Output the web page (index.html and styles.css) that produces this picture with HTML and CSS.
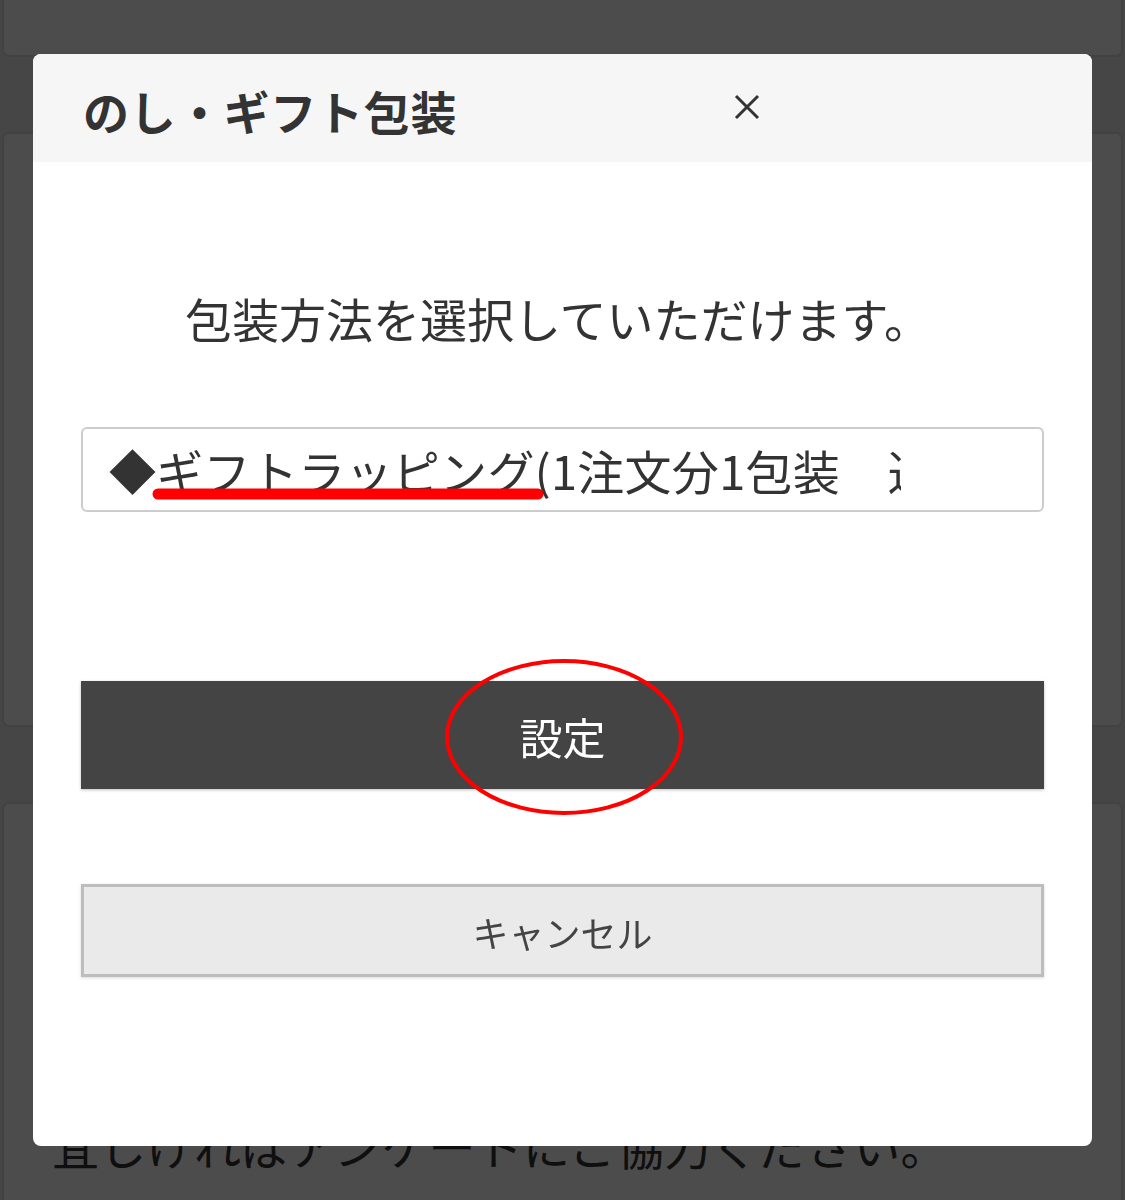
FILE: index.html
```html
<!DOCTYPE html>
<html lang="ja">
<head>
<meta charset="utf-8">
<title>のし・ギフト包装</title>
<link rel="stylesheet" href="styles.css">
</head>
<body>
<div class="page">
  <div class="card card-top"></div>
  <div class="card card-mid"></div>
  <div class="card card-bottom">
    <p class="survey">宜しければアンケートにご協力ください。</p>
  </div>
</div>
<div class="overlay"></div>
<div class="modal">
  <div class="modal-header">
    <h1 class="modal-title">のし・ギフト包装</h1>
    <span class="close" aria-label="close">
      <svg width="26" height="26" viewBox="0 0 26 26"><path d="M2 2 L24 24 M24 2 L2 24" stroke="#333" stroke-width="3" fill="none"/></svg>
    </span>
  </div>
  <div class="modal-body">
    <p class="lead">包装方法を選択していただけます。</p>
    <div class="select"><span class="select-text">◆ギフトラッピング(1注文分1包装　送料無料)</span></div>
    <button class="btn btn-primary">設定</button>
    <button class="btn btn-cancel">キャンセル</button>
  </div>
  <svg class="marks" width="1059" height="1092" viewBox="0 0 1059 1092">
    <line x1="125" y1="440" x2="505" y2="440" stroke="#ff0000" stroke-width="11" stroke-linecap="round"/>
    <ellipse cx="531" cy="683" rx="117" ry="76" stroke="#ff0000" stroke-width="4" fill="none"/>
  </svg>
</div>
</body>
</html>
```
FILE: styles.css
```css
* { box-sizing: border-box; }
html, body {
  margin: 0;
  padding: 0;
  height: 100%;
  overflow: hidden;
}
body {
  background: #ececec;
  font-family: "Noto Sans CJK JP", "Noto Sans", sans-serif;
  color: #333;
}
.page {
  padding: 0 2px;
  display: flex;
  flex-direction: column;
  gap: 75px;
}
.card {
  background: #fff;
  border: 2px solid #dcdcdc;
  border-radius: 7px;
}
.card-top {
  margin-top: -60px;
  height: 117px;
}
.card-mid {
  height: 595px;
}
.card-bottom {
  height: 500px;
  padding: 307px 0 0 48px;
}
.survey {
  margin: 0;
  font-size: 47px;
  letter-spacing: 0.3px;
  line-height: 68px;
  color: #333;
  white-space: nowrap;
}
.overlay {
  position: fixed;
  inset: 0;
  background: rgba(0, 0, 0, 0.7);
}
.modal {
  position: fixed;
  left: 33px;
  top: 54px;
  width: 1059px;
  height: 1092px;
  background: #fff;
  border-radius: 8px;
  overflow: hidden;
  display: flex;
  flex-direction: column;
}
.modal-header {
  height: 108px;
  background: #f6f6f6;
  display: flex;
  align-items: center;
  justify-content: space-between;
  padding: 0 332px 0 50px;
}
.modal-title {
  margin: 0;
  font-size: 46px;
  font-weight: 700;
  color: #333;
  letter-spacing: 0.8px;
  padding-top: 4px;
}
.close {
  display: flex;
  margin-top: -2px;
}
.modal-body {
  padding: 0 48px;
  display: flex;
  flex-direction: column;
}
.lead {
  margin: 122px 0 0 0;
  padding-left: 104px;
  font-size: 47px;
  line-height: 68px;
  color: #333;
  white-space: nowrap;
}
.select {
  margin-top: 75px;
  height: 85px;
  border: 2px solid #cccccc;
  border-radius: 6px;
  display: flex;
  align-items: center;
  padding: 0 141px 0 26px;
  overflow: hidden;
}
.select-text {
  display: block;
  overflow: hidden;
  white-space: nowrap;
  font-size: 47px;
  letter-spacing: 0.3px;
  line-height: 64px;
  color: #333;
  width: 100%;
}
.btn {
  font-family: inherit;
  width: 100%;
  cursor: pointer;
  margin: 0;
}
.btn-primary {
  margin-top: 169px;
  height: 108px;
  background: #444444;
  color: #fff;
  border: none;
  font-size: 43px;
  padding-top: 3px;
  box-shadow: 0 1px 3px rgba(0, 0, 0, 0.25);
}
.btn-cancel {
  margin-top: 95px;
  height: 93px;
  background: #eaeaea;
  color: #444;
  border: 3px solid #bdbdbd;
  font-size: 36px;
  padding-top: 4px;
  box-shadow: 0 1px 3px rgba(0, 0, 0, 0.15);
}
.marks {
  position: absolute;
  left: 0;
  top: 0;
  pointer-events: none;
}
```
